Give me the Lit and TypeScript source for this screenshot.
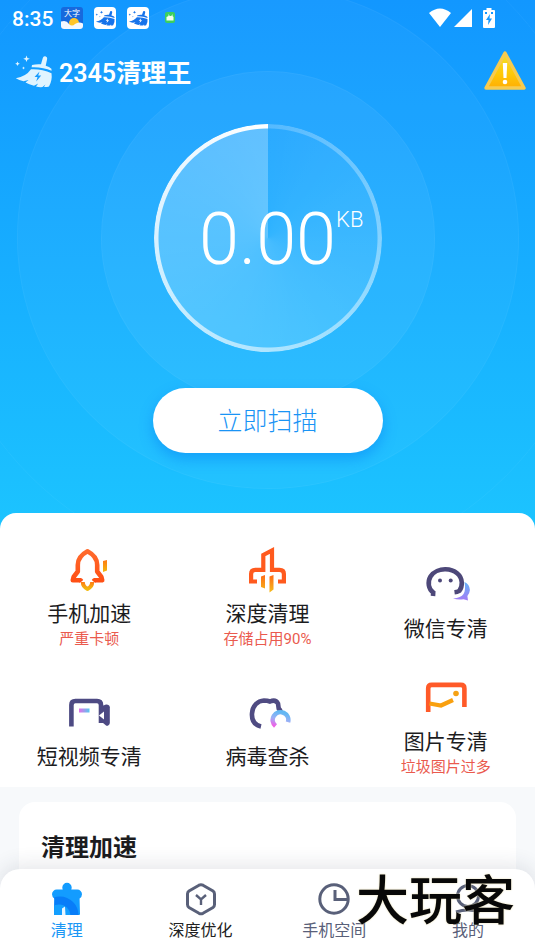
import { LitElement, html, css, svg, TemplateResult } from "lit";
import { customElement, property } from "lit/decorators.js";

const broom = (body: string, bolt: string) => svg`
  <path fill=${body} d="M27.800 3q.4-2 2.500-1.700q2.200.5 1.900 2.500l-1.500 7q3.800.8 5.700 3l.2 2q-9-4-20-3.500l.4-2.200q4-1.200 9-.8z"/>
  <path fill=${body} d="M16 14.200q11-.5 20.500 4q1 7-2.500 13.300q-2.500.7-5 .5l1.500-2.500l-3 2.600q-3.500.3-6.500-.6l2.200-3l-4.200 2.300q-5-1.300-8.500-3.300l3-2.500l-5 1.300Q4 25 .8 23.200Q11 21.500 16 14.200z"/>
  <path fill=${bolt} d="M24.500 16.500l-5 5.500h3l-1.300 4.500l5-6h-3z"/>
  <path fill=${body} d="M11.500.5l.9 2.400l2.400.9l-2.400.9l-.9 2.400l-.9-2.400l-2.400-.9l2.400-.9zM2.500 6.500l.7 1.600l1.600.7l-1.600.7l-.7 1.600l-.7-1.600l-1.600-.7l1.600-.7zM8.500 11.500l.5 1l1 .5l-1 .5l-.5 1l-.5-1l-1-.5l1-.5z"/>`;

const sweepBadge = html`
  <svg width="24" height="24" viewBox="0 0 24 24" aria-hidden="true">
    <rect x="1" y="1" width="22" height="22" rx="4" fill="#fff"/>
    <g transform="translate(2.500 4.500) scale(.52 .47)">${broom("#1673ea", "#fff")}</g>
  </svg>`;

const toolIcons: Record<string, TemplateResult> = {
  rocket: html`<svg width="48" height="48" viewBox="0 0 48 48" aria-hidden="true">
    <defs>
      <linearGradient id="r" x1="0" y1="0" x2="0" y2="1"><stop stop-color="#ff6a2c"/><stop offset="1" stop-color="#ff4f14"/></linearGradient>
      <linearGradient id="y" x1="0" y1="0" x2="0" y2="1"><stop stop-color="#ff7a16"/><stop offset="1" stop-color="#f2b90c"/></linearGradient>
    </defs>
    <path d="M16.500 36.500L15.500 35.300H7.800L8.600 32l4.200-5.500V20c0-6 3.700-10.500 9.700-13.700C28.500 9.500 32.200 14 32.200 20v6.500l4.200 5.500l.8 3.300H29.500L28.500 36.500" fill="none" stroke="url(#r)" stroke-width="4.600" stroke-linejoin="round"/>
    <path d="M17.800 37c0 3.600 2 5.600 4.700 6.900c2.700-1.300 4.700-3.300 4.700-6.900" fill="none" stroke="url(#y)" stroke-width="4"/>
    <path d="M38 16l4-1v10.500l-4 1.500z" fill="url(#y)"/>
  </svg>`,
  sweep: html`<svg width="48" height="48" viewBox="0 0 48 48" aria-hidden="true">
    <defs><linearGradient id="y" x1="0" y1="0" x2="0" y2="1"><stop stop-color="#ff6a16"/><stop offset="1" stop-color="#f5bd1c"/></linearGradient></defs>
    <path d="M14 36.500H8.100V29q0-4.200 4.200-4.200h8V10L29 5.500v19.300h7.500q4.400 0 4.400 4.200v7.500H35" fill="none" stroke="#ff5a1e" stroke-width="4.200"/>
    <path d="M18 31.500l4-1.500v13.500l-4-1.500zM26.500 31.500l4-1.500v14.500l-4 3z" fill="url(#y)"/>
  </svg>`,
  chat: html`<svg width="48" height="48" viewBox="0 0 48 48" aria-hidden="true">
    <defs><linearGradient id="c" x1="0" y1="0" x2="0" y2="1"><stop stop-color="#64b4f8"/><stop offset="1" stop-color="#a47bf5"/></linearGradient></defs>
    <path d="M42.500 22q5 2 5.400 8q-.3 3.500-2.500 6l.6 4.500q-3-1-4.500-1.300q-5.500.8-10.500-.6q8-.8 10.500-4.500q2.500-4 1-12.100z" fill="url(#c)"/>
    <path d="M11 36l.2-3.500C6.500 29.500 5.200 22 8.500 16.500C11.500 11.500 18 9.200 23.500 9.300C33 9.500 39.500 15 39.800 22.500c.1 3.500-.3 5.500-2.300 8.200q-2.500 1.300-5 1.600" fill="none" stroke="#4d4879" stroke-width="4.600"/>
    <circle cx="18" cy="20.500" r="2" fill="#4d4879"/><circle cx="28.700" cy="20.500" r="2" fill="#4d4879"/>
  </svg>`,
  video: html`<svg width="48" height="48" viewBox="0 0 48 48" aria-hidden="true">
    <defs><linearGradient id="v"><stop stop-color="#e56ee8"/><stop offset="1" stop-color="#55c8f0"/></linearGradient></defs>
    <path d="M6.400 38.500V17q0-4 4-4H32q4 0 4 4v18" fill="none" stroke="#4d4a83" stroke-width="4.600"/>
    <path d="M37 18l4-1.500q3.500-.2 3.800 2.700V35q-.5 3-3.500 2.800L34 31.500V23.500z" fill="#4d4a83"/>
    <path d="M34 27.500l5-4v8z" fill="#fff"/>
    <rect x="14" y="20.500" width="10.500" height="4" fill="url(#v)"/>
  </svg>`,
  virus: html`<svg width="48" height="48" viewBox="0 0 48 48" aria-hidden="true">
    <defs><linearGradient id="w" x1=".5" y1="0" x2=".2" y2="1"><stop stop-color="#62b8f3"/><stop offset=".5" stop-color="#9bb0f6"/><stop offset="1" stop-color="#ee62e6"/></linearGradient></defs>
    <path d="M18 38.500C11.500 37 8.600 32 9 25.500C9.400 18 14.500 12.800 21 12.500q3.500 0 6 1q5.500-2.500 8 2l.7 5q1.500 1.500 1.800 3" fill="none" stroke="#4f4b82" stroke-width="4.600"/>
    <path d="M32.500 38A7.800 7.800 0 1 1 45 34.200" fill="none" stroke="url(#w)" stroke-width="4.600"/>
  </svg>`,
  photo: html`<svg width="48" height="48" viewBox="0 0 48 48" aria-hidden="true">
    <path d="M6.200 39V15.500q0-3.600 3.600-3.600h29q3.600 0 3.600 3.600V34" fill="none" stroke="#ff5a28" stroke-width="4.600"/>
    <path d="M7.500 30.500l11.500 2l12-5.500" fill="none" stroke="#f9a00f" stroke-width="4.200"/>
    <circle cx="34" cy="20.500" r="2.800" fill="#f5a114"/>
  </svg>`,
};

const navIcons: Record<string, TemplateResult> = {
  clean: html`<svg width="34" height="34" viewBox="0 0 34 34" aria-hidden="true">
    <defs><clipPath id="b">
      <circle cx="17" cy="5.500" r="4.700"/><path d="M13 7h8v6h-8z"/>
      <rect x="2" y="7.500" width="30" height="9.500" rx="4.700"/>
      <path d="M4.500 13h25l.5 19q0 1-1 1H5q-1 0-1-1z"/>
    </clipPath></defs>
    <g clip-path="url(#b)"><rect width="34" height="34" fill="#139cff"/><circle cx="10" cy="33" r="18.500" fill="#087df8"/><circle cx="9" cy="34" r="11.500" fill="#139fff"/></g>
    <path d="M12 33v-6.500l3-2l.5 8.500z" fill="#e8f6ff"/>
  </svg>`,
  boost: html`<svg width="34" height="34" viewBox="0 0 34 34" aria-hidden="true" fill="none" stroke="#596079">
    <path d="M15 3.200q2-1 4 0l10 5.800q1.500 1 1.500 3v10.500q0 2-1.500 3l-10 5.800q-2 1-4 0L5 25.500q-1.500-1-1.500-3V12q0-2 1.500-3z" stroke-width="3"/>
    <path d="M12 13l5 4.500l5-4.500M17 17.500V23" stroke-width="2.400"/>
  </svg>`,
  space: html`<svg width="34" height="34" viewBox="0 0 34 34" aria-hidden="true" fill="none" stroke="#596079" stroke-width="3">
    <circle cx="17" cy="17" r="14.200"/><path d="M18 8v9.500h13"/>
  </svg>`,
  me: html`<svg width="34" height="34" viewBox="0 0 34 34" aria-hidden="true" fill="none" stroke="#596079" stroke-width="3">
    <circle cx="17" cy="14" r="10.500"/><path d="M5 30q12-4 24 0"/>
  </svg>`,
};

@customElement("tool-tile")
class ToolTile extends LitElement {
  @property() icon = "";
  @property() label = "";
  @property() note = "";

  static styles = css`
    :host { display: grid; }
    button {
      display: flex; flex-direction: column; align-items: center; justify-content: center;
      height: 114px; padding: 0; border: 0; background: none; font: inherit; color: #1c1c1e; cursor: pointer;
    }
    svg { display: block; margin-bottom: 5px; }
    .label { font-size: 21px; line-height: 32px; }
    .note { font-size: 15px; line-height: 18px; margin-bottom: 11px; color: #ea5a4e; }
  `;

  render() {
    return html`<button type="button">
      ${toolIcons[this.icon]}
      <span class="label">${this.label}</span>
      ${this.note ? html`<span class="note">${this.note}</span>` : ""}
    </button>`;
  }
}

@customElement("app-root")
class AppRoot extends LitElement {
  private tools = [
    { icon: "rocket", label: "手机加速", note: "严重卡顿" },
    { icon: "sweep", label: "深度清理", note: "存储占用90%" },
    { icon: "chat", label: "微信专清", note: "" },
    { icon: "video", label: "短视频专清", note: "" },
    { icon: "virus", label: "病毒查杀", note: "" },
    { icon: "photo", label: "图片专清", note: "垃圾图片过多" },
  ];

  private tabs = [
    { icon: "clean", label: "清理", tone: "active" },
    { icon: "boost", label: "深度优化", tone: "dark" },
    { icon: "space", label: "手机空间", tone: "" },
    { icon: "me", label: "我的", tone: "" },
  ];

  static styles = css`
    :host {
      display: flex; flex-direction: column; height: 100vh; overflow: hidden;
      font-family: Roboto, "Noto Sans CJK SC", sans-serif; background: #f7f9fb; color: #1c1c1e;
    }
    * { box-sizing: border-box; }
    svg { display: block; }
    button { font: inherit; border: 0; padding: 0; background: none; cursor: pointer; }
    main { flex: 1; min-height: 0; overflow-y: auto; scrollbar-width: none; }
    .hero {
      position: relative; overflow: hidden; padding-bottom: 76px;
      display: flex; flex-direction: column; align-items: center;
      background: linear-gradient(#1297ff, #1cc4ff); color: #fff;
    }
    .status, .header { position: relative; z-index: 1; width: 100%; display: flex; align-items: center; }
    .status { height: 36px; padding: 0 40px 0 12px; }
    .time { font-size: 21px; line-height: 24px; padding-top: 2px; font-weight: 500; margin-right: 7px; }
    .apps { display: flex; align-items: center; gap: 9px; flex: 1; }
    .signals { display: flex; align-items: center; gap: 3px; }
    .signals .battery { margin-left: 8px; }
    .header { height: 72px; padding: 0 8px 0 15px; }
    h1 { flex: 1; margin: 0 0 0 6px; padding-top: 3px; font-size: 25px; line-height: 36px; font-weight: 600; }
    .dial {
      position: relative; width: 228px; height: 228px; margin-top: 16px; border-radius: 50%;
      display: grid; place-items: center;
      background: conic-gradient(rgba(255,255,255,.02), rgba(255,255,255,.16) 50%, rgba(255,255,255,.28));
    }
    .halo {
      position: absolute; top: 50%; left: 50%; transform: translate(-50%, -50%); border-radius: 50%;
      background: rgba(255,255,255,.03); border: 1px solid rgba(255,255,255,.04);
    }
    .near { width: 334px; height: 334px; background: rgba(255,255,255,.05); }
    .mid { width: 502px; height: 502px; }
    .far { width: 674px; height: 674px; background: none; }
    .ring {
      position: absolute; inset: 0; border-radius: 50%;
      background: conic-gradient(rgba(255,255,255,.2), rgba(255,255,255,.55) 50%, #fff);
      mask: radial-gradient(closest-side, transparent calc(100% - 5px), #000 calc(100% - 4px));
    }
    .amount { position: relative; padding-top: 4px; font-size: 72px; line-height: 80px; font-weight: 300; }
    .unit { position: absolute; left: 100%; top: 8px; font-size: 22px; line-height: 32px; }
    .scan {
      position: relative; width: 230px; height: 65px; padding-bottom: 3px; margin-top: 36px; border-radius: 33px;
      background: #fff; color: #1a94f5; font-size: 25px; font-weight: 300;
      box-shadow: 0 6px 14px rgba(0,112,240,.4);
    }
    .tools {
      position: relative; margin-top: -16px; padding-top: 32px; border-radius: 16px 16px 0 0; background: #fff;
      display: grid; grid-template-columns: repeat(3, 1fr); row-gap: 14px;
    }
    .card { margin: 15px 19px 0; padding: 28px 22px 80px; border-radius: 16px; background: #fff; }
    h2 { margin: 0; font-size: 24px; line-height: 36px; font-weight: 700; }
    nav {
      position: relative; margin-top: -20px; height: 82px; padding-top: 13px;
      border-radius: 20px 20px 0 0; background: #fff; box-shadow: 0 -4px 20px rgba(40,50,70,.12);
      display: grid; grid-template-columns: repeat(4, 1fr);
    }
    nav a {
      display: flex; flex-direction: column; align-items: center; gap: 3px;
      font-size: 16px; line-height: 24px; text-decoration: none; color: #596079;
    }
    nav a.active { color: #1a97f5; }
    nav a.dark { color: #222; }
    .mark {
      position: absolute; right: 20px; top: 5px; font-size: 53px; line-height: 56px; font-weight: 500; color: #080808;
      text-shadow: 0 0 2px #e5d9a8; pointer-events: none;
    }
  `;

  render() {
    return html`
      <main>
        <section class="hero">
          <div class="status">
            <span class="time">8:35</span>
            <div class="apps">
              <svg width="24" height="24" viewBox="0 0 24 24" aria-hidden="true">
                <defs><clipPath id="k"><rect x="1" y="1" width="22" height="22" rx="3"/></clipPath></defs>
                <g clip-path="url(#k)">
                  <rect width="24" height="24" fill="#1769dd"/>
                  <circle cx="14" cy="17" r="5" fill="#ffc52a"/>
                  <path d="M0 16q6-3 9 2q3 3 6 0q4-3 9 0v7H0z" fill="#f4f8ff"/>
                </g>
                <text x="4" y="10" font-size="8" fill="#fff">大字</text>
              </svg>
              ${sweepBadge}${sweepBadge}
              <svg width="24" height="24" viewBox="0 0 24 24" aria-hidden="true">
                <rect x="6" y="6" width="10" height="11" rx="2" fill="#3ccf5e"/>
                <path d="M7.500 11l2-1V8l1.200 2h1.600l1.200-2v2l1 1v3.500h-7z" fill="#effff0"/>
              </svg>
            </div>
            <div class="signals">
              <svg width="22" height="20" viewBox="0 0 22 20" aria-hidden="true"><path d="M0 5Q11-4 22 5L11 19z" fill="#fff"/></svg>
              <svg width="18" height="20" viewBox="0 0 18 20" aria-hidden="true"><path d="M18 1v18H0z" fill="#fff"/></svg>
              <svg class="battery" width="12" height="20" viewBox="0 0 12 20" aria-hidden="true">
                <path d="M3.500 0h5v2H11q1 0 1 1v16q0 1-1 1H1q-1 0-1-1V3q0-1 1-1h2.500z" fill="#fff"/>
                <path d="M7 6l-4 6h2.500l-.5 5l4-6.500H6.500zM2 4h2v2H2zM8 4h2v2H8z" fill="#1599ff"/>
              </svg>
            </div>
          </div>
          <header class="header">
            <svg width="38" height="34" viewBox="0 0 38 34" aria-hidden="true">${broom("#e0f4ff", "#1a9dff")}</svg>
            <h1>2345清理王</h1>
            <button type="button" aria-label="警告">
              <svg width="44" height="44" viewBox="0 0 44 44" aria-hidden="true">
                <defs><linearGradient id="t" x1="0" y1="0" x2="0" y2="1"><stop stop-color="#f2e02a"/><stop offset=".6" stop-color="#ffc808"/><stop offset="1" stop-color="#ffae05"/></linearGradient></defs>
                <path d="M22 3L41 38H3z" fill="url(#t)" stroke="#f7cb50" stroke-width="3.400" stroke-linejoin="round"/>
                <path d="M19.800 13h4.400l-.7 15h-3z" fill="#fff"/><circle cx="22" cy="32" r="2.300" fill="#fff"/>
              </svg>
            </button>
          </header>
          <div class="dial">
            <i class="halo far"></i><i class="halo mid"></i><i class="halo near"></i>
            <i class="ring"></i>
            <div class="amount">0.00<span class="unit">KB</span></div>
          </div>
          <button class="scan" type="button">立即扫描</button>
        </section>
        <section class="tools">
          ${this.tools.map(t => html`<tool-tile icon=${t.icon} label=${t.label} note=${t.note}></tool-tile>`)}
        </section>
        <section class="card"><h2>清理加速</h2></section>
      </main>
      <nav>
        ${this.tabs.map(t => html`<a href="#" class=${t.tone}>${navIcons[t.icon]}<span>${t.label}</span></a>`)}
        <span class="mark">大玩客</span>
      </nav>
    `;
  }
}
